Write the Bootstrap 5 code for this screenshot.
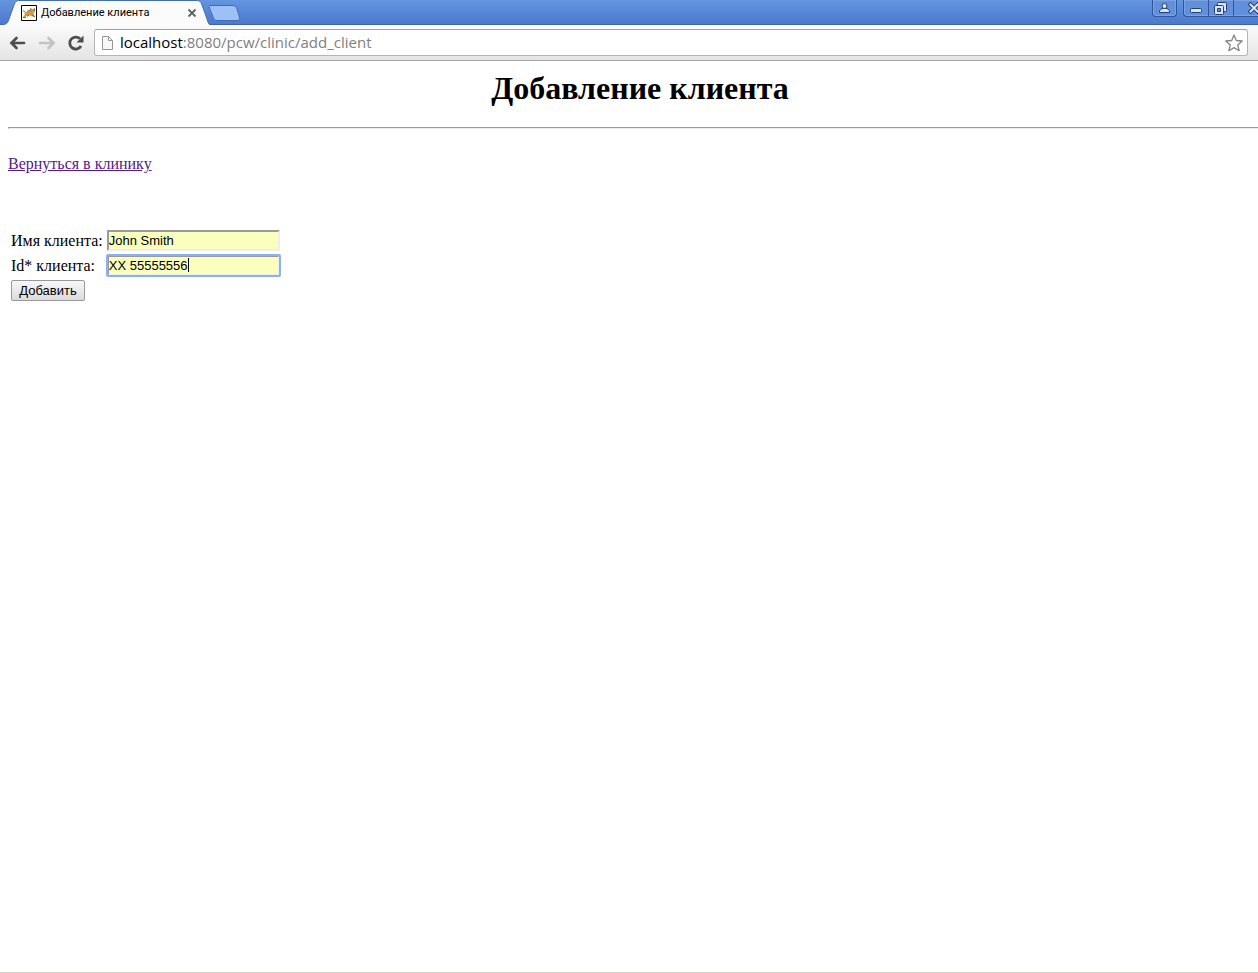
<!DOCTYPE html>
<html lang="ru">
<head>
<meta charset="utf-8">
<meta name="viewport" content="width=device-width, initial-scale=1">
<title>Добавление клиента</title>
<link href="https://cdn.jsdelivr.net/npm/bootstrap@5.3.0/dist/css/bootstrap.min.css" rel="stylesheet">
<style>
body { background: #fff; color: #000; font-family: "Liberation Serif", serif; font-size: 16px; line-height: 18px; overflow-x: hidden; }
button { color: inherit; }
.icon-btn { border: 0; background: none; padding: 0; line-height: 0; flex: none; }
.tab-strip { height: 25px; background: linear-gradient(#6495df, #4b79cd); border-bottom: 1px solid #3a63ab; }
.browser-tab { width: 210px; height: 25px; padding: 0 13px 0 21px; font: 11px/24px Roboto, sans-serif; }
.tab-shape { position: absolute; left: 0; top: 0; z-index: 0; }
.browser-tab > :not(.tab-shape) { position: relative; z-index: 1; }
.tab-title { margin-left: 4px; }
.new-tab { margin-left: -3px; height: 25px; }
.win-controls { height: 17px; gap: 6px; }
.win-group { border: 1px solid #2f569d; border-top: 0; border-radius: 0 0 4px 4px; background: #6290da; box-shadow: inset 0 0 0 1px #7ba3e4; overflow: hidden; }
.win-group-end { border-right: 0; border-bottom-right-radius: 0; }
.win-group .icon-btn + .icon-btn { border-left: 1px solid #2f569d; }
.tool-row { height: 36px; padding: 0 10px 0 9px; background: linear-gradient(#fbfbfb, #e4e4e4); border-bottom: 1px solid #a3a3a3; }
.nav-keys { width: 85px; gap: 11px; }
.address { height: 27px; border: 1px solid #b5b5b5; border-top-color: #a0a0a0; border-radius: 3px; background: #fff; padding: 0 4px 0 6px; font: 15px/25px "Open Sans", sans-serif; }
.url-text { color: #808080; margin-left: 6px; }
.url-text b { color: #000; font-weight: 400; }
.page-body { padding: 9px 0 0 8px; border-bottom: 1px solid #d4d0c8; }
.page-title { font-size: 32px; font-weight: 700; line-height: 37px; margin: 0 0 20px; padding-left: 14px; }
.rule { border: 1px solid; border-color: #9a9a9a #eee #eee #9a9a9a; border-right: 0; opacity: 1; margin: 0 0 26px; }
.back-link, .back-link:hover { color: #551a8b; }
.client-form { margin-top: 54px; }
.client-table { border-collapse: separate; border-spacing: 2px; }
.client-table td { padding: 1px; height: 23px; }
.field { display: block; width: 173px; height: 21px; padding: 1px 0; border: 2px solid; border-color: #9a9a9a #eee #eee #9a9a9a; border-radius: 0; background: #faffbd; color: #000; font: 13px/15px "Liberation Sans", sans-serif; }
.field-active, .field:focus { outline: 2px solid #8ab1f5; outline-offset: -1px; border-radius: 1px; }
.caret { position: absolute; left: 82px; top: 4px; width: 1px; height: 14px; background: #000; }
.add-btn { display: block; width: 74px; height: 21px; padding: 0; border: 1px solid #999; border-radius: 2px; background: linear-gradient(#f7f7f7, #dcdcdc); color: #000; font: 13px/18px "Liberation Sans", sans-serif; }
</style>
<script src="https://cdn.jsdelivr.net/npm/bootstrap@5.3.0/dist/js/bootstrap.bundle.min.js"></script>
</head>
<body class="d-flex flex-column min-vh-100">
<header>
  <div class="tab-strip d-flex align-items-start">
    <div class="browser-tab position-relative d-flex align-items-center flex-shrink-0">
      <svg class="tab-shape" width="210" height="26" viewBox="0 0 210 26" aria-hidden="true"><path d="M0 26V24.5H3C7 24.5 8 22 9 19L14 5C15.500 1.500 16 .5 20 .5H196C200 .5 201 2 202 5L207 19C208 22 208.500 24.500 210 24.500V26Z" fill="#fbfbfb"/><path d="M0 24.500H3C7 24.500 8 22 9 19L14 5C15.500 1.500 16 .5 20 .5H196C200 .5 201 2 202 5L207 19C208 22 208.500 24.500 210 24.500" fill="none" stroke="#416db7"/></svg>
      <svg width="16" height="16" viewBox="0 0 16 16" aria-hidden="true"><path d="M.5.5h15v15H.5z" fill="#fffdf4" stroke="#000"/><path d="M3 8L7 6.500 9 5 9.500 3l1.500 1h1.500L14 3v3.500L12.500 8 13 10l1.500 2-3-.500L9 10.500 6 11l-3 1.500L2 12l2-2.500Z" fill="#d19a47"/><path d="M2 5.500L4.500 7M2 12.500h3M6 11.500l2-1.500M9.500 3.500l.5 2M13.500 3.500V6M11 10l3 2M6 6.500L9 5" fill="none" stroke="#736c62"/></svg>
      <span class="tab-title">Добавление клиента</span>
      <button type="button" class="icon-btn ms-auto" aria-label="Закрыть вкладку"><svg width="10" height="10" viewBox="0 0 10 10"><path d="M1.500 1.500l7 7M8.500 1.500l-7 7" stroke="#606060" stroke-width="1.800"/></svg></button>
    </div>
    <button type="button" class="icon-btn new-tab" aria-label="Новая вкладка"><svg width="34" height="25" viewBox="0 0 34 25"><path d="M4 5.500H25C28 5.500 29 6 30 9L32.500 17C33 19.500 32 20.500 30 20.500H10C8 20.500 7 19.500 6 17L2.500 8C2 6 2.500 5.500 4 5.500Z" fill="#9dc1f5" stroke="#426cb7"/></svg></button>
    <div class="win-controls d-flex ms-auto">
      <div class="win-group d-flex"><button type="button" class="icon-btn" aria-label="Профиль"><svg width="23" height="16" viewBox="0 0 23 16"><g fill="#d8e6fb" stroke="#263e70"><path d="M6.500 12.500V10.500L9 8.500h5l2.500 2v2Z"/><circle cx="11.500" cy="6" r="2.500"/></g></svg></button></div>
      <div class="win-group win-group-end d-flex"><button type="button" class="icon-btn" aria-label="Свернуть"><svg width="24" height="16" viewBox="0 0 24 16"><rect x="6.500" y="8.500" width="11" height="4" rx="1" fill="#d8e6fb" stroke="#263e70"/></svg></button><button type="button" class="icon-btn" aria-label="Развернуть"><svg width="24" height="16" viewBox="0 0 24 16"><g fill="#d8e6fb" stroke="#263e70"><rect x="8.500" y="2.500" width="9" height="9" rx="1"/><rect x="5.500" y="5.500" width="9" height="9" rx="1"/><path d="M8.500 8.500h3v3h-3z" fill="#6290da"/></g></svg></button><button type="button" class="icon-btn" aria-label="Закрыть"><svg width="24" height="16" viewBox="0 0 24 16"><g fill="none" stroke-linecap="square"><path d="M16.500 4.500l7 7M23.500 4.500l-7 7" stroke="#263e70" stroke-width="4"/><path d="M16.500 4.500l7 7M23.500 4.500l-7 7" stroke="#d8e6fb" stroke-width="2"/></g></svg></button></div>
    </div>
  </div>
  <div class="tool-row d-flex align-items-center">
    <nav class="nav-keys d-flex flex-shrink-0" aria-label="Навигация">
      <button type="button" class="icon-btn" aria-label="Назад"><svg width="18" height="18" viewBox="0 0 18 18"><path d="M15 9H3M7.500 4L2.500 9l5 5" fill="none" stroke="#4d4d4d" stroke-width="2.700" stroke-linecap="round"/></svg></button>
      <button type="button" class="icon-btn" aria-label="Вперёд" disabled><svg width="18" height="18" viewBox="0 0 18 18"><path d="M2 9h13M10.500 4l5 5-5 5" fill="none" stroke="#c3c3c3" stroke-width="2.700" stroke-linecap="round"/></svg></button>
      <button type="button" class="icon-btn" aria-label="Обновить"><svg width="18" height="18" viewBox="0 0 18 18"><path d="M14 12A6 6 0 1 1 13 4.800" fill="none" stroke="#4d4d4d" stroke-width="2.800"/><path d="M16.500 1.500V8.500H9.500Z" fill="#4d4d4d"/></svg></button>
    </nav>
    <div class="address d-flex align-items-center flex-grow-1">
      <svg width="13" height="16" viewBox="0 0 13 16" aria-hidden="true"><path d="M1.500 1.500h6l4 4v9h-10zM7.500 1.500v4h4" fill="#f8f8f8" stroke="#969696"/></svg>
      <span class="url-text"><b>localhost</b>:8080/pcw/clinic/add_client</span>
      <button type="button" class="icon-btn ms-auto" aria-label="Добавить в закладки"><svg width="18" height="18" viewBox="0 0 18 18"><path d="M9 1l2.300 5.500 5.900.500-4.500 3.900 1.400 5.800L9 13.600l-5.100 3.100 1.400-5.800L.8 7l5.900-.500Z" fill="#fff" stroke="#858585" stroke-width="1.300" stroke-linejoin="round"/></svg></button>
    </div>
  </div>
</header>
<main class="page-body flex-grow-1">
  <h1 class="page-title text-center">Добавление клиента</h1>
  <hr class="rule">
  <a class="back-link" href="#">Вернуться в клинику</a>
  <form class="client-form">
    <table class="client-table">
      <tr><td><label for="client-name">Имя клиента:</label></td><td><input class="field" id="client-name" type="text" value="John Smith"></td></tr>
      <tr><td><label for="client-id">Id* клиента:</label></td><td class="position-relative"><input class="field field-active" id="client-id" type="text" value="XX 55555556"><span class="caret"></span></td></tr>
      <tr><td><button type="button" class="add-btn">Добавить</button></td><td></td></tr>
    </table>
  </form>
</main>
</body>
</html>
